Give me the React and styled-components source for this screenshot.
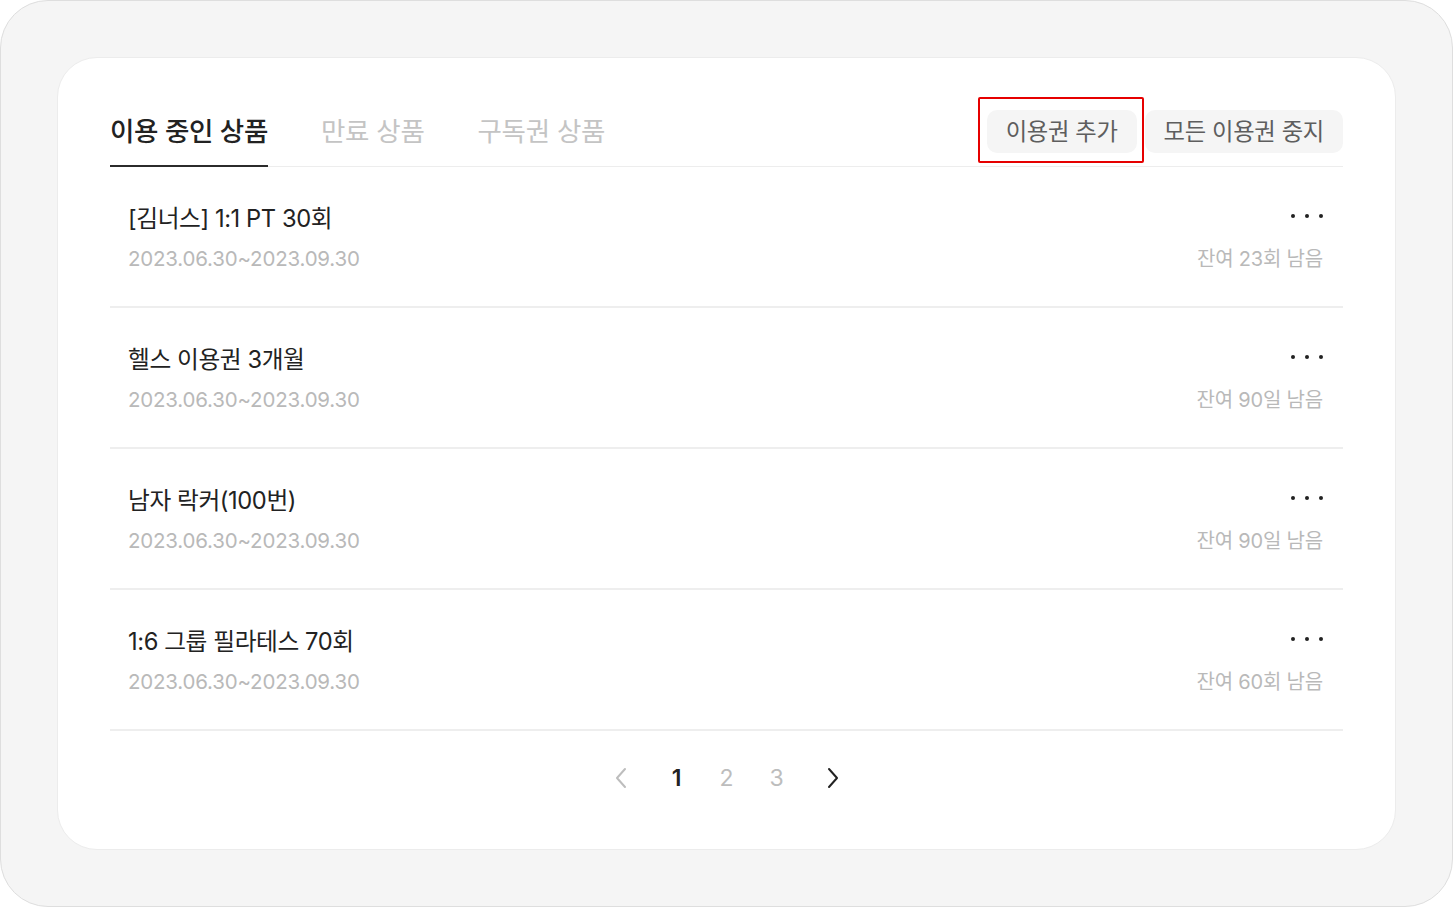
import React from "react"
import styled, { createGlobalStyle } from "styled-components"

const GlobalStyle = createGlobalStyle`
    html, body {
        margin: 0;
        padding: 0;
        background: #ffffff;
    }
    body {
        font-family: Inter, "Noto Sans CJK KR", sans-serif;
        -webkit-font-smoothing: antialiased;
    }
`

const Frame = styled.div`
    box-sizing: border-box;
    width: 1453px;
    height: 907px;
    padding: 56px;
    background: #f5f5f5;
    border: 1px solid #dedede;
    border-radius: 48px;
`
const Card = styled.div`
    box-sizing: border-box;
    height: 100%;
    padding: 39px 52px 0;
    background: #fff;
    border: 1px solid #ececec;
    border-radius: 40px;
    display: flex;
    flex-direction: column;
`
const Header = styled.div`
    display: flex;
    align-items: center;
    justify-content: space-between;
    height: 69px;
    border-bottom: 1px solid #ededed;
`
const Tabs = styled.div`
    display: flex;
    gap: 53px;
    height: 100%;
`
const Tab = styled.button`
    position: relative;
    border: none;
    background: none;
    padding: 0 0 4px;
    height: 100%;
    font-family: inherit;
    font-size: 26.5px;
    font-weight: ${p => (p.$active ? 500 : 400)};
    letter-spacing: -0.3px;
    color: ${p => (p.$active ? "#222" : "#c4c4c4")};
    cursor: pointer;
    &::after {
        content: "";
        display: ${p => (p.$active ? "block" : "none")};
        position: absolute;
        left: 0;
        right: 0;
        bottom: -1px;
        height: 2px;
        background: #2b2b2b;
    }
`
const Actions = styled.div`
    display: flex;
    gap: 8px;
`
const ActionButton = styled.button`
    position: relative;
    height: 43px;
    padding: 0 19px 3px;
    border: none;
    border-radius: 10px;
    background: #f5f5f5;
    font-family: inherit;
    font-size: 23.3px;
    letter-spacing: -0.3px;
    color: #5e5e5e;
    cursor: pointer;
    &::after {
        content: "";
        display: ${p => (p.$highlight ? "block" : "none")};
        position: absolute;
        top: -13px;
        bottom: -10px;
        left: -9px;
        right: -7px;
        border: 2px solid #e60000;
        border-radius: 2px;
    }
`
const List = styled.ul`
    list-style: none;
    margin: 0;
    padding: 0;
`
const Row = styled.li`
    box-sizing: border-box;
    height: 141px;
    padding: 37px 20px 0 18px;
    border-bottom: 2px solid #eeeeee;
    display: flex;
    justify-content: space-between;
`
const Info = styled.div`
    display: flex;
    flex-direction: column;
    gap: 10px;
`
const Title = styled.div`
    font-size: 23.7px;
    line-height: 30px;
    color: #222;
    letter-spacing: -0.4px;
`
const Muted = styled.div`
    font-size: 20.5px;
    line-height: 30px;
    color: #b9b9b9;
    letter-spacing: -0.2px;
`
const Side = styled.div`
    display: flex;
    flex-direction: column;
    align-items: flex-end;
    gap: 16px;
    ${Muted} {
        font-size: 20px;
    }
`
const MoreButton = styled.button`
    display: flex;
    align-items: center;
    gap: 9.5px;
    height: 24px;
    padding: 0;
    border: none;
    background: none;
    cursor: pointer;
    span {
        width: 4.5px;
        height: 4.5px;
        border-radius: 50%;
        background: #222;
    }
`
const Pagination = styled.nav`
    display: flex;
    justify-content: center;
    align-items: center;
    gap: 30px;
    margin-top: 30px;
    height: 34px;
`
const PageNum = styled.button`
    border: none;
    background: none;
    padding: 0;
    width: 20px;
    font-family: inherit;
    font-size: 23px;
    font-weight: ${p => (p.$active ? 600 : 400)};
    color: ${p => (p.$active ? "#222" : "#bdbdbd")};
    cursor: pointer;
`
const Arrow = styled.button`
    display: flex;
    border: none;
    background: none;
    padding: 0;
    margin: 0 ${p => (p.$next ? "0 0 9px" : "9px 0 0")};
    color: ${p => (p.$disabled ? "#bdbdbd" : "#222")};
    cursor: pointer;
`

const items = [
    { title: "[김너스] 1:1 PT 30회", period: "2023.06.30~2023.09.30", left: "잔여 23회 남음" },
    { title: "헬스 이용권 3개월", period: "2023.06.30~2023.09.30", left: "잔여 90일 남음" },
    { title: "남자 락커(100번)", period: "2023.06.30~2023.09.30", left: "잔여 90일 남음" },
    { title: "1:6 그룹 필라테스 70회", period: "2023.06.30~2023.09.30", left: "잔여 60회 남음" },
]

const Chevron = ({ dir }) => (
    <svg width="14" height="22" viewBox="0 0 14 22" fill="none">
        <path
            d={dir === "left" ? "M11 2 L3 11 L11 20" : "M3 2 L11 11 L3 20"}
            stroke="currentColor"
            strokeWidth="2"
            strokeLinecap="round"
            strokeLinejoin="round"
        />
    </svg>
)

const App = () => (
    <>
        <GlobalStyle />
        <Frame>
            <Card>
                <Header>
                    <Tabs>
                        <Tab $active>이용 중인 상품</Tab>
                        <Tab>만료 상품</Tab>
                        <Tab>구독권 상품</Tab>
                    </Tabs>
                    <Actions>
                        <ActionButton $highlight>이용권 추가</ActionButton>
                        <ActionButton>모든 이용권 중지</ActionButton>
                    </Actions>
                </Header>
                <List>
                    {items.map(item => (
                        <Row key={item.title}>
                            <Info>
                                <Title>{item.title}</Title>
                                <Muted>{item.period}</Muted>
                            </Info>
                            <Side>
                                <MoreButton aria-label="more">
                                    <span />
                                    <span />
                                    <span />
                                </MoreButton>
                                <Muted>{item.left}</Muted>
                            </Side>
                        </Row>
                    ))}
                </List>
                <Pagination>
                    <Arrow $disabled aria-label="prev"><Chevron dir="left" /></Arrow>
                    <PageNum $active>1</PageNum>
                    <PageNum>2</PageNum>
                    <PageNum>3</PageNum>
                    <Arrow $next aria-label="next"><Chevron dir="right" /></Arrow>
                </Pagination>
            </Card>
        </Frame>
    </>
)

export default App
